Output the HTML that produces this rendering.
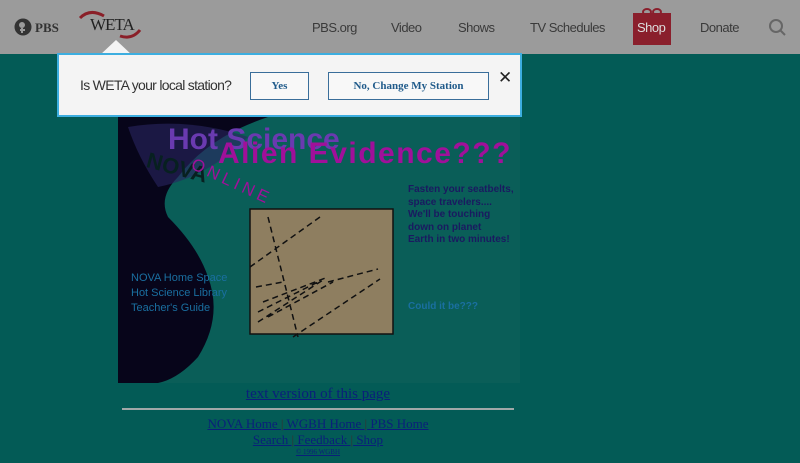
<!DOCTYPE html>
<html><head><style>
*{margin:0;padding:0;box-sizing:border-box}
body{width:800px;height:463px;overflow:hidden;background:#035b56;font-family:"Liberation Sans",sans-serif;position:relative}
.hdr{position:absolute;left:0;top:0;width:800px;height:54px;background:#9b9b9b}
.nav{position:absolute;top:20px;font-size:13px;letter-spacing:-0.5px;color:#3a3a3a}
.pop{position:absolute;left:57px;top:53px;width:465px;height:64px;background:#f4f4f4;border:2px solid #3daee0}
.btn{position:absolute;top:17px;height:28px;border:1px solid #3a6e9a;font-family:"Liberation Serif",serif;font-weight:bold;font-size:11px;color:#1f5a8a;text-align:center;line-height:26px;background:#f8f8f8}
.img{position:absolute;left:118px;top:117px;width:402px;height:266px;background:#0a5e58;overflow:hidden}
.f{position:absolute;font-family:"Liberation Serif",serif;color:#0a1f7a;text-decoration:underline;text-align:center;width:800px;left:-82px}
.s{color:#1a6fa0;font-size:10px;font-weight:bold;position:absolute;white-space:nowrap}
</style></head><body>
<div class="hdr">
 <svg style="position:absolute;left:14px;top:18px" width="18" height="18"><circle cx="9" cy="9" r="8.5" fill="#333"/><circle cx="8" cy="7" r="3" fill="#9b9b9b"/><path d="M8 10 L8 15 M6 12 L11 12" stroke="#9b9b9b" stroke-width="2"/></svg>
 <div style="position:absolute;left:35px;top:20px;font-family:'Liberation Serif',serif;font-weight:bold;font-size:13px;color:#333">PBS</div>
 <svg style="position:absolute;left:78px;top:10px" width="65" height="30"><path d="M2 8 Q12 -2 26 6" stroke="#8a1f28" stroke-width="3" fill="none"/><path d="M42 26 Q54 30 62 20" stroke="#8a1f28" stroke-width="3" fill="none"/></svg>
 <div style="position:absolute;left:90px;top:15px;font-family:'Liberation Serif',serif;font-size:17px;letter-spacing:-1px;color:#222">WETA</div>
 <div class="nav" style="left:312px">PBS.org</div>
 <div class="nav" style="left:391px">Video</div>
 <div class="nav" style="left:458px">Shows</div>
 <div class="nav" style="left:530px">TV Schedules</div>
 <div style="position:absolute;left:633px;top:16px;width:38px;height:29px;background:#8a1f2c"></div>
 <svg style="position:absolute;left:641px;top:7px" width="22" height="10"><ellipse cx="6" cy="5" rx="4" ry="3" stroke="#8a1f2c" stroke-width="2" fill="none"/><ellipse cx="16" cy="5" rx="4" ry="3" stroke="#8a1f2c" stroke-width="2" fill="none"/></svg>
 <div style="position:absolute;left:633px;top:13px;width:38px;height:3px;background:#8a1f2c"></div>
 <div class="nav" style="left:637px;color:#ddd">Shop</div>
 <div class="nav" style="left:700px">Donate</div>
 <svg style="position:absolute;left:768px;top:18px" width="20" height="20"><circle cx="8" cy="8" r="6" stroke="#666" stroke-width="2" fill="none"/><path d="M12.5 12.5 L17 17" stroke="#666" stroke-width="2"/></svg>
</div>
<div class="img">
 <svg width="402" height="266" style="position:absolute;left:0;top:0"><path d="M0 0 L150 0 Q90 20 60 60 Q40 80 50 100 Q80 130 90 160 Q105 200 80 240 Q60 262 40 266 L0 266Z" fill="#07051a"/><path d="M10 10 Q70 0 130 20 Q90 60 40 70 Q20 40 10 10Z" fill="#2a2460" opacity=".6"/>
 <rect x="132" y="92" width="143" height="125" fill="#8e7e60" stroke="#111" stroke-width="1.5"/>
 <path d="M132 150 L202 100 M175 220 L262 162 M140 205 L205 163 M140 195 L200 165 M145 185 L210 160 M150 200 L215 165 M138 170 L165 165 M210 165 L260 152 M150 100 L180 220" stroke="#111" stroke-width="1.5" fill="none" stroke-dasharray="6 4"/></svg>
 <div style="position:absolute;left:50px;top:6px;font-weight:bold;font-size:30px;color:#6a3ab0">Hot Science</div>
 <div style="position:absolute;left:100px;top:20px;font-weight:bold;font-size:30px;letter-spacing:1.5px;color:#a0109a">Alien Evidence???</div>
 <div style="position:absolute;left:28px;top:38px;font-weight:bold;font-size:22px;color:#072020;transform:rotate(15deg)">NOVA</div>
 <div style="position:absolute;left:70px;top:55px;font-size:17px;color:#a0109a;letter-spacing:4px;transform:rotate(25deg)">ONLINE</div>
 <div class="s" style="left:290px;top:67px;color:#1a1a60;line-height:12.5px">Fasten your seatbelts,<br>space travelers....<br>We'll be touching<br>down on planet<br>Earth in two minutes!</div>
 <div class="s" style="left:290px;top:184px">Could it be???</div>
 <div class="s" style="left:13px;top:154px;line-height:15px;font-weight:normal;font-size:11px">NOVA Home Space<br>Hot Science Library<br>Teacher's Guide</div>
</div>
<div class="f" style="top:386px;font-size:15px">text version of this page</div>
<div style="position:absolute;left:122px;top:408px;width:392px;height:2px;background:#a0a8a8"></div>
<div class="f" style="top:416px;font-size:13px">NOVA Home <span style="text-decoration:none;color:#333">|</span> WGBH Home <span style="text-decoration:none;color:#333">|</span> PBS Home</div>
<div class="f" style="top:432px;font-size:13px">Search <span style="text-decoration:none;color:#333">|</span> Feedback <span style="text-decoration:none;color:#333">|</span> Shop</div>
<div class="f" style="top:448px;font-size:7px">© 1996 WGBH</div>
<svg style="position:absolute;left:100px;top:40px" width="34" height="16"><path d="M0 15 L16 0 L32 15" fill="#f4f4f4"/></svg>
<div class="pop">
 <div style="position:absolute;left:21px;top:22px;font-size:14px;letter-spacing:-0.7px;color:#333">Is WETA your local station?</div>
 <div class="btn" style="left:191px;width:59px">Yes</div>
 <div class="btn" style="left:269px;width:161px">No, Change My Station</div>
 <div style="position:absolute;left:439px;top:13px;font-size:17px;color:#222">✕</div>
</div>
</body></html>
